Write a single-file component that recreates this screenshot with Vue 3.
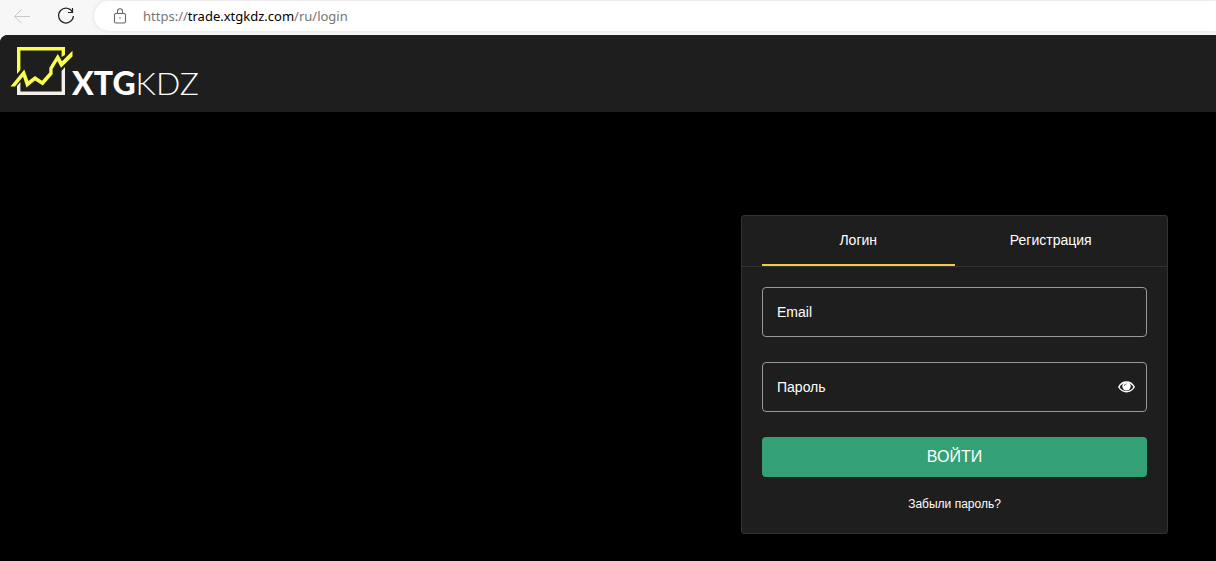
<script setup>
import { ref } from 'vue'

const email = ref('')
const password = ref('')
const showPassword = ref(false)
const activeTab = ref('login')
const tabs = [
  { id: 'login', label: 'Логин' },
  { id: 'register', label: 'Регистрация' },
]
</script>

<template>
  <div class="window">
    <div class="toolbar">
      <button class="tool back" type="button" aria-label="Back" disabled>
        <svg width="18" height="16" viewBox="0 0 18 16" fill="none" stroke="#c8c8c8">
          <path d="M17 8.5H1.5M8.5 1.5L1.5 8.5L8.5 15" />
        </svg>
      </button>
      <button class="tool reload" type="button" aria-label="Reload">
        <svg width="18" height="18" viewBox="0 0 18 18" fill="none" stroke="#222" stroke-width="1.2">
          <path d="M15.6 5.2A7.4 7.4 0 1 0 16.4 9" />
          <path d="M15.500 1V5.500H11" />
        </svg>
      </button>
      <div class="address">
        <svg width="14" height="16" viewBox="0 0 14 16" fill="none" stroke="#666" stroke-width="1.1">
          <rect x="1.5" y="5.5" width="11" height="9.5" rx="1.5" />
          <path d="M4.5 5.5V3.2a2.5 2.5 0 0 1 5 0V5.5" />
          <circle cx="7" cy="10" r="0.8" fill="#666" stroke="none" />
        </svg>
        <span class="url">https://<b>trade.xtgkdz.com</b>/ru/login</span>
      </div>
    </div>

    <div class="page">
      <header class="header">
        <a class="logo" href="#" aria-label="XTGKDZ">
          <svg width="64" height="50" viewBox="0 0 64 50">
            <path d="M7 40L10.400 36V45.600H51.600V25L55 21V49H7Z" fill="#f3efea" />
            <path d="M7 28V1H55V9L51.600 11V4.400H10.400V24Z" fill="#fbff4a" />
            <path
              d="M0.500 40.500H5L13 30.800L16.500 41.500L25 34.500L32.800 39.500L42.600 28.200V23L47.400 15L51 21.800L62.500 10.500V4.800L52 15.200L47.800 8L39.300 21.800V26.600L32 34.800L25 30L18.400 35L14.300 23.500Z"
              fill="#fbff4a"
            />
          </svg>
          <span class="wordmark"><b>XTG</b><span>KDZ</span></span>
        </a>
      </header>

      <main class="main">
        <form class="card" @submit.prevent>
          <div class="tabs">
            <button
              v-for="tab in tabs"
              :key="tab.id"
              class="tab"
              :class="{ active: activeTab === tab.id }"
              type="button"
              @click="activeTab = tab.id"
            >{{ tab.label }}</button>
          </div>
          <div class="fields">
            <div class="field">
              <input v-model="email" type="email" placeholder="Email" aria-label="Email" />
            </div>
            <div class="field">
              <input
                v-model="password"
                :type="showPassword ? 'text' : 'password'"
                placeholder="Пароль"
                aria-label="Пароль"
              />
              <button class="eye" type="button" aria-label="Показать пароль" @click="showPassword = !showPassword">
                <svg width="17" height="12" viewBox="0 0 17 12">
                  <path d="M0.800 6C4.400-0.600 12.600-0.600 16.200 6C12.600 12.300 4.400 12.300 0.800 6Z" fill="none" stroke="#fff" stroke-width="1.500" />
                  <circle cx="8.500" cy="5.200" r="4.200" fill="#fff" />
                  <path d="M6.200 5.200A2.300 2.300 0 0 1 8.500 2.900" fill="none" stroke="#1e1e1e" stroke-width="0.600" />
                </svg>
              </button>
            </div>
            <button class="submit" type="submit">ВОЙТИ</button>
            <a class="forgot" href="#">Забыли пароль?</a>
          </div>
        </form>
      </main>
    </div>
  </div>
</template>

<style>
body {
  margin: 0;
  background: #000;
}
</style>

<style scoped>
* {
  box-sizing: border-box;
}

.window {
  background: #f7f7f7;
  font-family: "Liberation Sans", Arial, sans-serif;
  color: #fff;
}

button {
  padding: 0;
  border: 0;
  background: none;
  color: inherit;
  font-family: inherit;
}

svg {
  display: block;
}

.toolbar {
  display: flex;
  align-items: center;
  height: 35px;
  padding: 0 0 3px 13px;
}

.reload {
  margin-left: 26px;
}

.address {
  flex: 1;
  display: flex;
  align-items: center;
  gap: 16px;
  height: 30px;
  margin-left: 19px;
  padding-left: 19px;
  background: #fff;
  border-radius: 15px 0 0 15px;
  box-shadow: 0 0 4px rgba(0, 0, 0, 0.1);
}

.url {
  font-family: "Noto Sans", "Open Sans", sans-serif;
  font-size: 13px;
  line-height: 20px;
  color: #757575;
}

.url b {
  font-weight: 400;
  color: #000;
}

.page {
  overflow: hidden;
  border-radius: 8px 0 0 0;
  background: #000;
}

.header {
  height: 77px;
  padding: 11px 10px;
  background: #1e1e1e;
}

.logo {
  display: flex;
  align-items: flex-end;
  width: max-content;
  color: #fff;
  text-decoration: none;
}

.wordmark {
  margin-left: -2px;
  font-family: Lato, sans-serif;
  font-size: 32px;
  line-height: 26px;
  font-weight: 300;
}

.wordmark b {
  font-weight: 900;
}

.main {
  display: flex;
  justify-content: flex-end;
  padding: 103px 48px 27px;
}

.card {
  width: 427px;
  background: #1e1e1e;
  border: 1px solid #333;
  border-radius: 3px;
}

.tabs {
  display: flex;
  padding: 0 20px;
  border-bottom: 1px solid #333;
}

.tab {
  flex: 1;
  height: 50px;
  border-bottom: 2px solid transparent;
  font-size: 14px;
}

.tab.active {
  border-color: #f2c94c;
}

.fields {
  display: flex;
  flex-direction: column;
  padding: 20px;
}

.field {
  position: relative;
  margin-bottom: 25px;
}

.field input {
  display: block;
  width: 100%;
  height: 50px;
  padding: 0 44px 0 14px;
  border: 1px solid #999;
  border-radius: 4px;
  background: transparent;
  color: #fff;
  font-family: inherit;
  font-size: 14px;
}

.field input::placeholder {
  color: #fff;
  opacity: 1;
}

.eye {
  position: absolute;
  top: 19px;
  right: 12px;
}

.submit {
  height: 40px;
  border-radius: 4px;
  background: #33a175;
  font-size: 16px;
}

.forgot {
  align-self: center;
  margin-top: 18px;
  font-size: 12px;
  line-height: 18px;
  color: #fff;
  text-decoration: none;
}
</style>
